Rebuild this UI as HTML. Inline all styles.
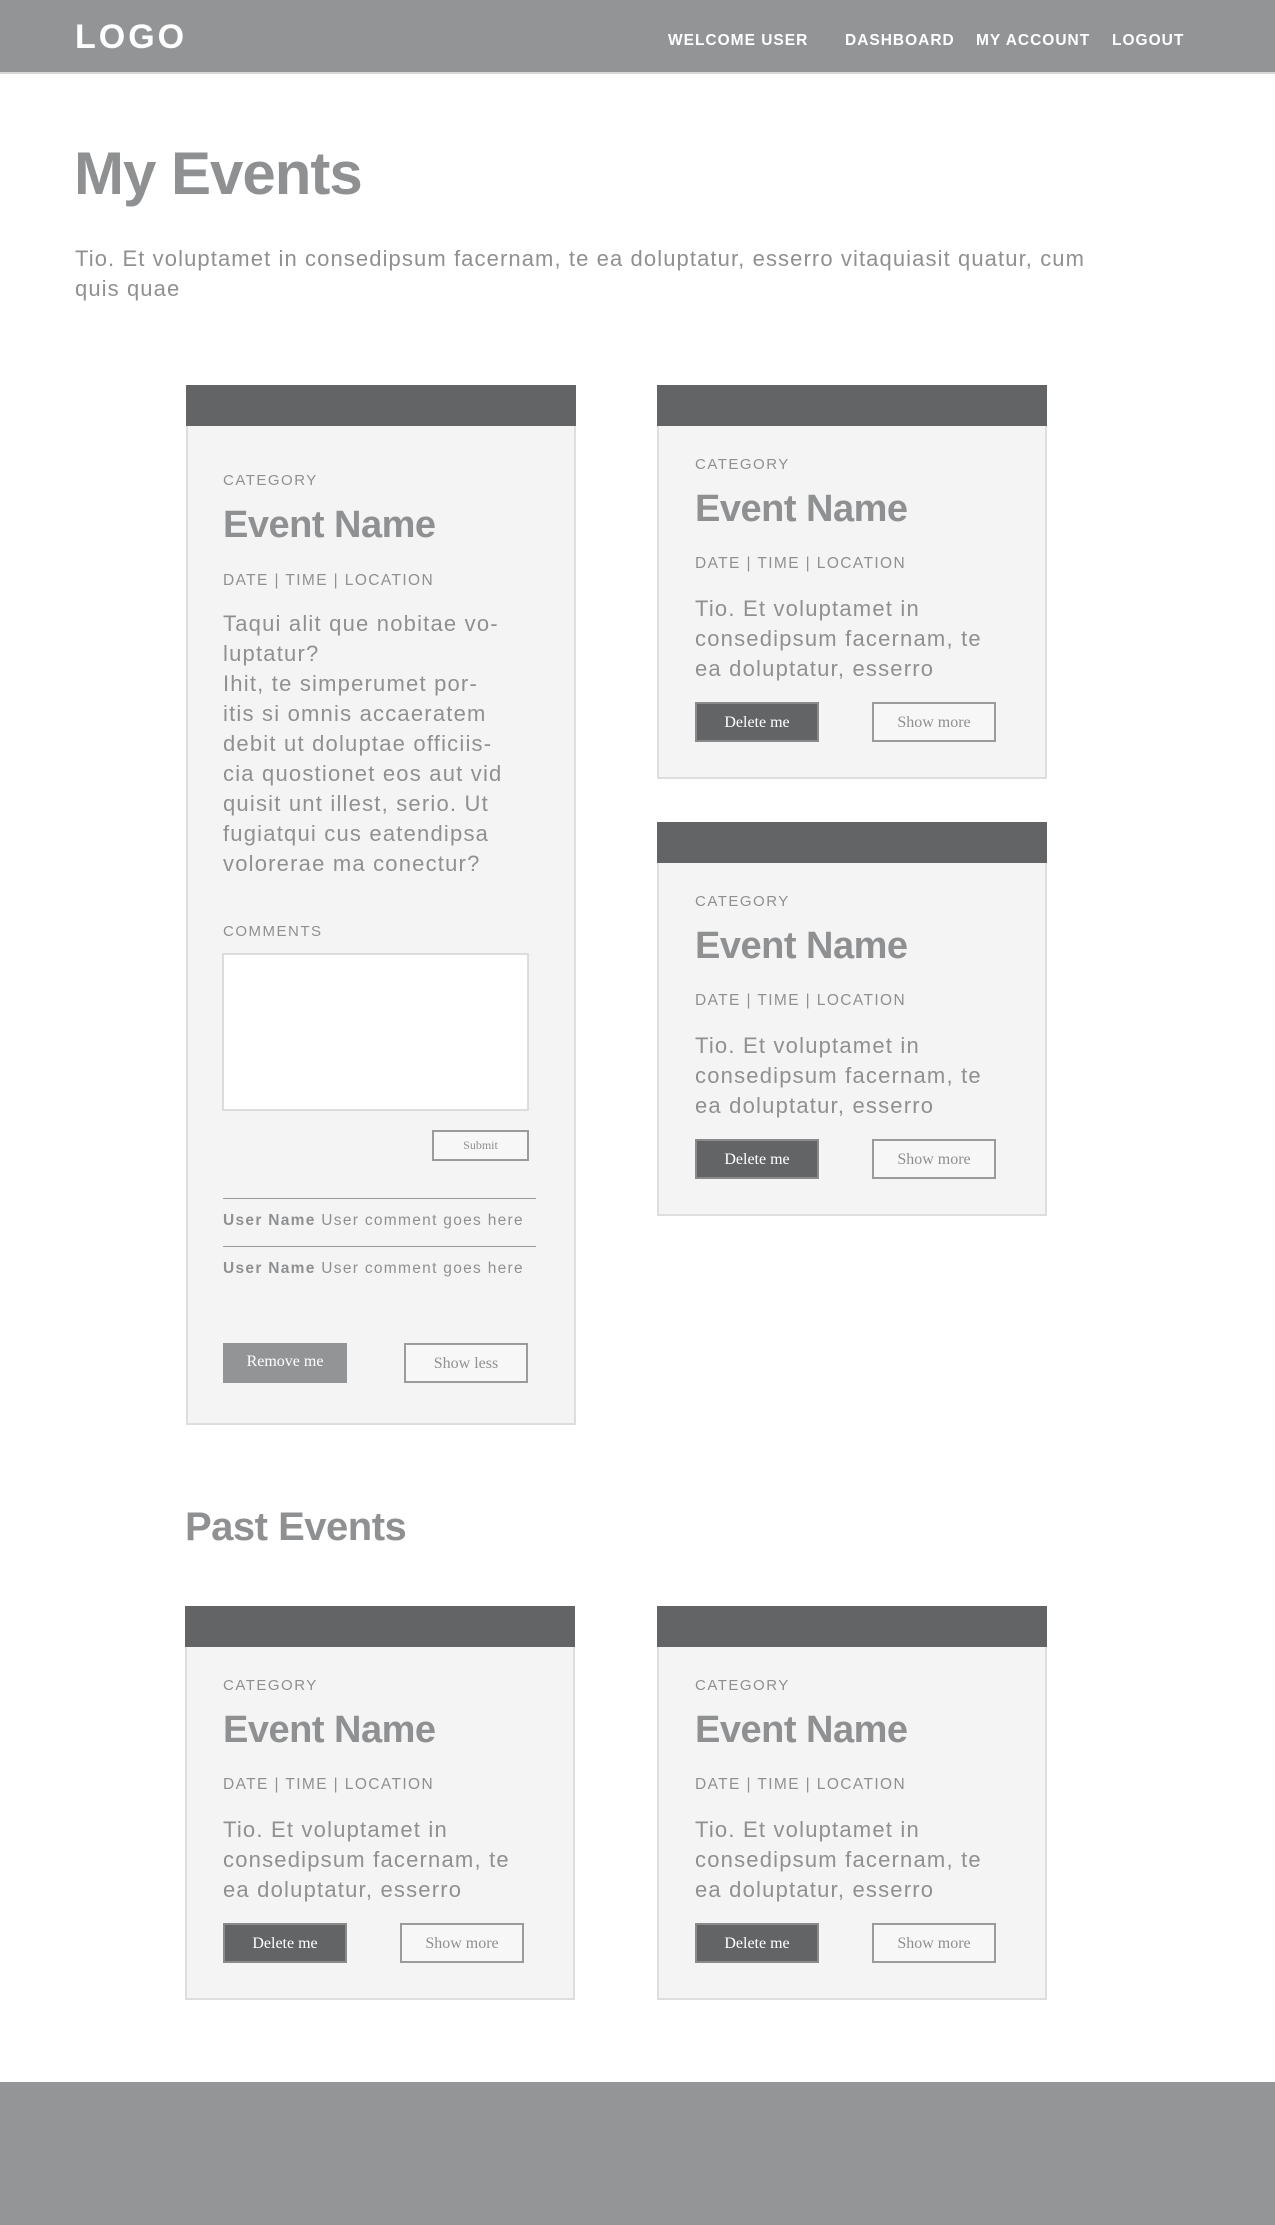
<!DOCTYPE html>
<html><head><meta charset="utf-8"><style>
*{margin:0;padding:0;box-sizing:border-box}
body{width:1275px;height:2225px;position:relative;background:#fff;font-family:"Liberation Sans",sans-serif;color:#8f9092;overflow:hidden}
.a{position:absolute;white-space:nowrap}
.nav{position:absolute;left:0;top:0;width:1275px;height:74px;background:#939496;border-bottom:2px solid #d8d8d8}
.nav .a{color:#fff;font-weight:bold}
.card{position:absolute;background:#f4f4f4;border:2px solid #dedede;border-top:none}
.card .hd{position:absolute;left:-2px;right:-2px;top:0;height:41px;background:#636466}
.cat{font-size:15px;letter-spacing:1.5px}
.en{font-size:38px;font-weight:bold;letter-spacing:-0.5px}
.dt{font-size:15.5px;letter-spacing:1.4px}
.bd{font-size:22px;line-height:30px;letter-spacing:1.2px;white-space:nowrap}
.btn{position:absolute;font-family:"Liberation Serif",serif;font-size:16px;text-align:center;line-height:38px;height:40px;width:124px}
.dk{background:#636466;color:#fff;border:2px solid #8a8a8c}
.ol{background:#f7f7f7;color:#8f9092;border:2px solid #9a9b9d}
</style></head><body>
<div class="nav">
<div class="a" style="left:75px;top:18px;font-size:34px;letter-spacing:3px">LOGO</div>
<div class="a" style="left:668px;top:32px;font-size:15.5px;letter-spacing:1px">WELCOME USER</div>
<div class="a" style="left:845px;top:32px;font-size:15.5px;letter-spacing:1px">DASHBOARD</div>
<div class="a" style="left:976px;top:32px;font-size:15.5px;letter-spacing:1px">MY ACCOUNT</div>
<div class="a" style="left:1112px;top:32px;font-size:15.5px;letter-spacing:1px">LOGOUT</div>
</div>
<div class="a" style="left:74px;top:139px;font-size:60px;font-weight:bold;letter-spacing:-1px">My Events</div>
<div class="a" style="left:75px;top:244px;font-size:22px;line-height:30px;letter-spacing:1.1px">Tio. Et voluptamet in consedipsum facernam, te ea doluptatur, esserro vitaquiasit quatur, cum<br>quis quae</div>

<!-- card 1 -->
<div class="card" style="left:186px;top:385px;width:390px;height:1040px"><div class="hd"></div>
<div class="a cat" style="left:35px;top:87px">CATEGORY</div>
<div class="a en" style="left:35px;top:119px">Event Name</div>
<div class="a dt" style="left:35px;top:187px">DATE | TIME | LOCATION</div>
<div class="a bd" style="left:35px;top:224px">Taqui alit que nobitae vo-<br>luptatur?<br>Ihit, te simperumet por-<br>itis si omnis accaeratem<br>debit ut doluptae officiis-<br>cia quostionet eos aut vid<br>quisit unt illest, serio. Ut<br>fugiatqui cus eatendipsa<br>volorerae ma conectur?</div>
<div class="a cat" style="left:35px;top:538px">COMMENTS</div>
<div class="a" style="left:34px;top:568px;width:307px;height:158px;background:#fff;border:2px solid #dcdcdc"></div>
<div class="btn ol" style="left:244px;top:745px;width:97px;height:31px;line-height:27px;font-size:12px">Submit</div>
<div class="a" style="left:35px;top:813px;width:313px;height:1px;background:#9a9a9a"></div>
<div class="a" style="left:35px;top:827px;font-size:15.5px;letter-spacing:1.3px"><b>User Name</b> User comment goes here</div>
<div class="a" style="left:35px;top:861px;width:313px;height:1px;background:#9a9a9a"></div>
<div class="a" style="left:35px;top:875px;font-size:15.5px;letter-spacing:1.3px"><b>User Name</b> User comment goes here</div>
<div class="btn" style="left:35px;top:958px;background:#939496;color:#fff">Remove me</div>
<div class="btn ol" style="left:216px;top:958px">Show less</div>
</div>

<!-- card 2 -->
<div class="card" style="left:657px;top:385px;width:390px;height:394px"><div class="hd"></div>
<div class="a cat" style="left:36px;top:71px">CATEGORY</div>
<div class="a en" style="left:36px;top:103px">Event Name</div>
<div class="a dt" style="left:36px;top:170px">DATE | TIME | LOCATION</div>
<div class="a bd" style="left:36px;top:209px">Tio. Et voluptamet in<br>consedipsum facernam, te<br>ea doluptatur, esserro</div>
<div class="btn dk" style="left:36px;top:317px">Delete me</div>
<div class="btn ol" style="left:213px;top:317px">Show more</div>
</div>

<!-- card 3 -->
<div class="card" style="left:657px;top:822px;width:390px;height:394px"><div class="hd"></div>
<div class="a cat" style="left:36px;top:71px">CATEGORY</div>
<div class="a en" style="left:36px;top:103px">Event Name</div>
<div class="a dt" style="left:36px;top:170px">DATE | TIME | LOCATION</div>
<div class="a bd" style="left:36px;top:209px">Tio. Et voluptamet in<br>consedipsum facernam, te<br>ea doluptatur, esserro</div>
<div class="btn dk" style="left:36px;top:317px">Delete me</div>
<div class="btn ol" style="left:213px;top:317px">Show more</div>
</div>

<div class="a" style="left:185px;top:1505px;font-size:40px;font-weight:bold;letter-spacing:-0.5px">Past Events</div>

<div class="card" style="left:185px;top:1606px;width:390px;height:394px"><div class="hd"></div>
<div class="a cat" style="left:36px;top:71px">CATEGORY</div>
<div class="a en" style="left:36px;top:103px">Event Name</div>
<div class="a dt" style="left:36px;top:170px">DATE | TIME | LOCATION</div>
<div class="a bd" style="left:36px;top:209px">Tio. Et voluptamet in<br>consedipsum facernam, te<br>ea doluptatur, esserro</div>
<div class="btn dk" style="left:36px;top:317px">Delete me</div>
<div class="btn ol" style="left:213px;top:317px">Show more</div>
</div>

<div class="card" style="left:657px;top:1606px;width:390px;height:394px"><div class="hd"></div>
<div class="a cat" style="left:36px;top:71px">CATEGORY</div>
<div class="a en" style="left:36px;top:103px">Event Name</div>
<div class="a dt" style="left:36px;top:170px">DATE | TIME | LOCATION</div>
<div class="a bd" style="left:36px;top:209px">Tio. Et voluptamet in<br>consedipsum facernam, te<br>ea doluptatur, esserro</div>
<div class="btn dk" style="left:36px;top:317px">Delete me</div>
<div class="btn ol" style="left:213px;top:317px">Show more</div>
</div>

<div class="a" style="left:0;top:2082px;width:1275px;height:143px;background:#949597"></div>
</body></html>
